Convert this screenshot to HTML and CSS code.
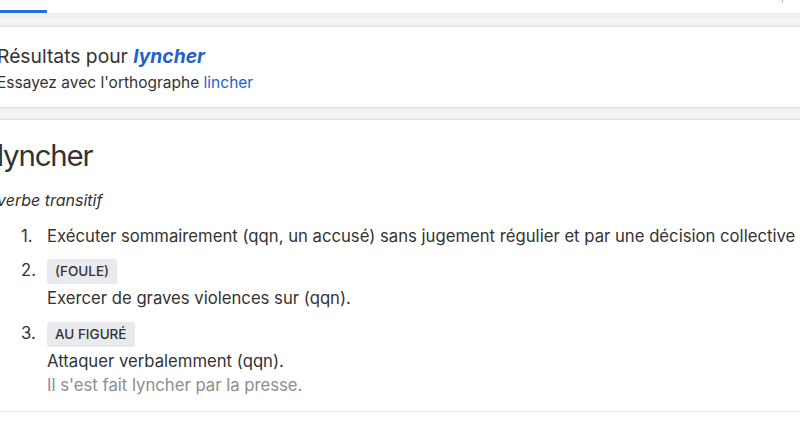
FILE: index.html
```html
<!DOCTYPE html>
<html lang="fr">
<head>
<meta charset="utf-8">
<link rel="stylesheet" href="styles.css">
</head>
<body>
<div class="tabs">
  <div class="tab-active"></div>
  <div class="tab-mark"></div>
</div>
<div class="band"></div>
<section class="card results">
  <h2 class="results-title">Résultats pour <a class="query">lyncher</a></h2>
  <p class="suggest">Essayez avec l'orthographe <a class="link">lincher</a></p>
</section>
<div class="band band2"></div>
<section class="card entry">
  <h1 class="word">lyncher</h1>
  <p class="pos">verbe transitif</p>
  <ol class="defs">
    <li class="sense"><span class="num">1.</span><div class="body">Exécuter sommairement (qqn, un accusé) sans jugement régulier et par une décision collective</div></li>
    <li class="sense"><span class="num num-tag">2.</span><div class="body"><span class="tag">(Foule)</span><div class="def">Exercer de graves violences sur (qqn).</div></div></li>
    <li class="sense"><span class="num num-tag">3.</span><div class="body"><span class="tag">Au figuré</span><div class="def">Attaquer verbalemment (qqn).</div><div class="ex">Il s'est fait lyncher par la presse.</div></div></li>
  </ol>
</section>
</body>
</html>
```
FILE: styles.css
```css
html, body {
  margin: 0;
  padding: 0;
  background: #ffffff;
  font-family: Inter, "Liberation Sans", Arial, sans-serif;
  color: #333333;
  overflow: hidden;
}
.tabs {
  height: 13px;
  display: flex;
  justify-content: space-between;
  align-items: flex-end;
  background: #ffffff;
}
.tab-active {
  width: 47px;
  height: 3px;
  background: #2a6fd6;
}
.tab-mark {
  align-self: flex-start;
  width: 1px;
  height: 3px;
  background: #bbbbbb;
  margin-right: 17px;
}
.band {
  height: 13px;
  background: linear-gradient(#eceef1, #f5f6f8 60%, #eeeff2);
  border-bottom: 1px solid #e2e3e6;
}
.band2 {
  height: 11px;
  border-top: 1px solid #dcdde0;
}
.card {
  background: #ffffff;
  margin-left: -3px;
}
.results {
  height: 80px;
  padding-top: 17px;
  box-sizing: border-box;
}
.results-title {
  margin: 0;
  font-size: 19.3px;
  font-weight: normal;
  line-height: 24px;
  color: #333;
}
.query {
  color: #1f63c9;
  font-style: italic;
  font-weight: bold;
}
.suggest {
  margin: 5px 0 0;
  font-size: 15.5px;
  line-height: 20px;
  color: #333;
}
.link {
  color: #1f63c9;
}
.entry {
  padding-top: 16px;
  height: 292px;
  box-sizing: border-box;
  border-bottom: 1px solid #e6e6e8;
}
.word {
  margin: 0;
  font-size: 29.5px;
  font-weight: normal;
  letter-spacing: -1.2px;
  line-height: 38px;
  color: #333;
}
.pos {
  margin: 16px 0 0;
  font-size: 16px;
  font-style: italic;
  line-height: 20px;
}
.defs {
  list-style: none;
  margin: 16px 0 0;
  padding-left: 24px;
  font-size: 16.7px;
  line-height: 20px;
  white-space: nowrap;
}
.sense {
  display: flex;
  margin-bottom: 13px;
}
.sense:nth-child(2) {
  margin-bottom: 14px;
}
.num {
  width: 26px;
  flex: none;
}
.num-tag {
  padding-top: 1px;
}
.body {
  display: flex;
  flex-direction: column;
  align-items: flex-start;
}
.tag {
  display: inline-block;
  background: #e9eaed;
  border-radius: 3px;
  padding: 0 8px;
  height: 25px;
  font-size: 13.5px;
  font-weight: 500;
  line-height: 25px;
  text-transform: uppercase;
  color: #333;
  margin-bottom: 4px;
}
.def {
  line-height: 20px;
}
.ex {
  color: #8d8d8f;
  margin-top: 4px;
}
```
